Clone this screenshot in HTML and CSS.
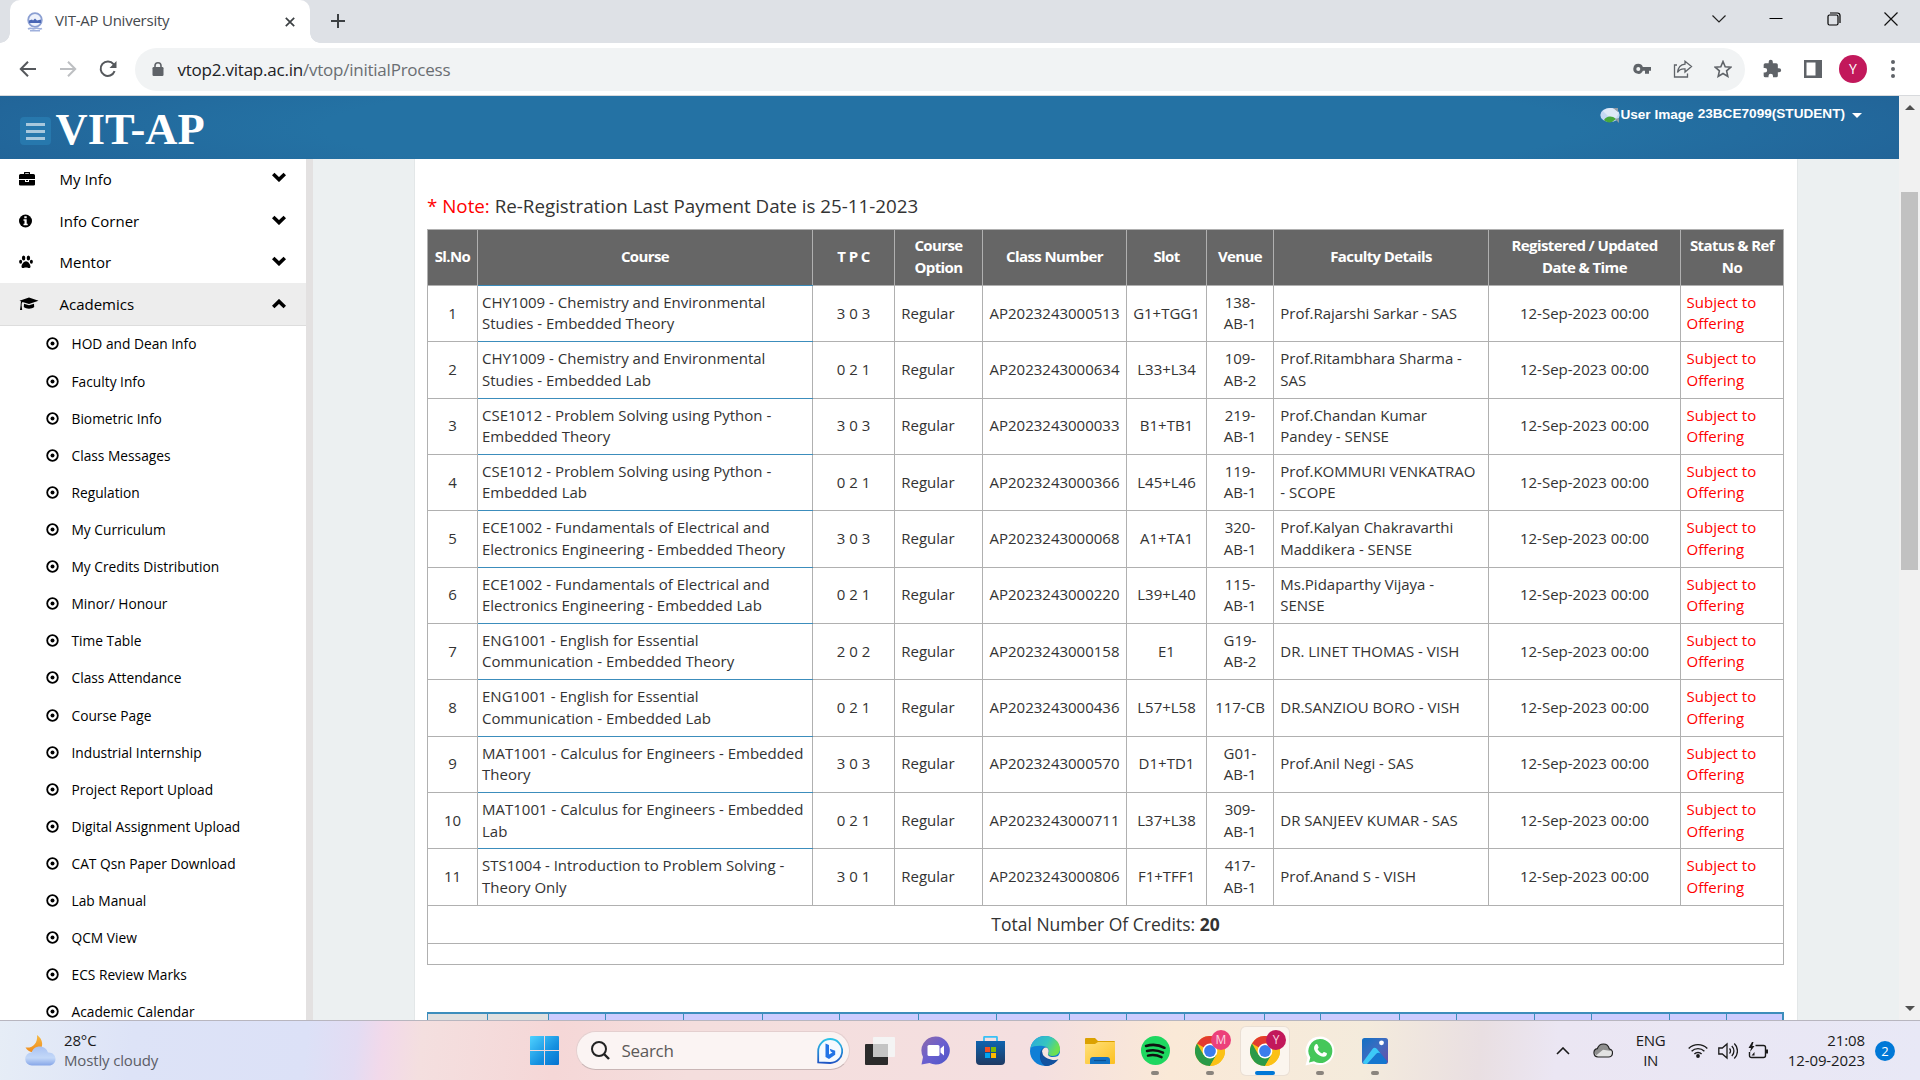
FILE: index.html
```
<!DOCTYPE html>
<html lang="en">
<head>
<meta charset="utf-8">
<title>VIT-AP University</title>
<link rel="stylesheet" href="styles.css">
</head>
<body>
<svg width="0" height="0" class="defs">
  <symbol id="dot" viewBox="0 0 13 13"><circle cx="6.5" cy="6.5" r="5.3" fill="none" stroke="#000" stroke-width="1.8"/><circle cx="6.5" cy="6.5" r="2" fill="#000"/></symbol>
  <symbol id="down" viewBox="0 0 14 10"><path d="M1.2 2 7 7.6 12.8 2" fill="none" stroke="#000" stroke-width="3.6"/></symbol>
  <symbol id="up" viewBox="0 0 14 10"><path d="M1.2 8 7 2.4 12.8 8" fill="none" stroke="#000" stroke-width="3.6"/></symbol>
  <symbol id="chrome" viewBox="0 0 30 30"><circle cx="15" cy="15" r="15" fill="#fbc116"/><path d="M15 15 2 7.5A15 15 0 0 1 28 7.5H15z" fill="#e33b2e"/><path d="M2 7.5A15 15 0 0 0 15 30L21.5 18.8 15 15 8.5 18.8z" fill="#2a9a48"/><path d="M28 7.5H15v7.500l6.500 3.800L15 30A15 15 0 0 0 28 7.500z" fill="#fbc116"/><circle cx="15" cy="15" r="7.400" fill="#fff"/><circle cx="15" cy="15" r="5.900" fill="#3b7ded"/></symbol>
</svg>

<div class="tabstrip">
  <div class="tab">
    <svg class="favicon" width="18" height="20" viewBox="0 0 18 20"><circle cx="9" cy="8" r="6.800" fill="#eef2fb" stroke="#8b9fd2" stroke-width="1.800"/><path d="M3 8.500 6 7.500 7 8.500 9 6.500 11 8.500 15 7.500V11H3z" fill="#4a67b5"/><path d="M2 17c3-2 4 1 7-.5s4 1.500 7 0M4 18.800h10" stroke="#9fb0dc" stroke-width="1.600" fill="none"/></svg>
    <span class="tab-title">VIT-AP University</span>
    <svg width="10" height="10" viewBox="0 0 10 10"><path d="M.8.8l8.400 8.400M9.200.8.8 9.200" stroke="#3c4043" stroke-width="1.700"/></svg>
  </div>
  <svg class="newtab" width="16" height="16" viewBox="0 0 16 16"><path d="M8 1v14M1 8h14" stroke="#3c4043" stroke-width="2"/></svg>
  <div class="winctl">
    <svg width="14" height="14" viewBox="0 0 14 14"><path d="M.5 3.500 7 10 13.500 3.500" stroke="#222" stroke-width="1.200" fill="none"/></svg>
    <svg width="14" height="14" viewBox="0 0 14 14"><path d="M.5 6.500h13" stroke="#000"/></svg>
    <svg width="14" height="14" viewBox="0 0 14 14"><rect x="1" y="3" width="10" height="10" rx="1.500" fill="none" stroke="#000" stroke-width="1.200"/><path d="M3 1h7.500a2.500 2.500 0 0 1 2.500 2.500V11" fill="none" stroke="#000" stroke-width="1.200"/></svg>
    <svg width="14" height="14" viewBox="0 0 14 14"><path d="M.5.5l13 13M13.500.5l-13 13" stroke="#111" stroke-width="1.200"/></svg>
  </div>
</div>

<div class="toolbar">
  <svg class="nav" width="18" height="18" viewBox="0 0 18 18"><path d="M17 9H2M9 1.800 1.800 9 9 16.200" fill="none" stroke="#55585c" stroke-width="2"/></svg>
  <svg class="nav" width="18" height="18" viewBox="0 0 18 18"><path d="M1 9h15M9 1.800 16.200 9 9 16.200" fill="none" stroke="#bdbfc2" stroke-width="2"/></svg>
  <svg class="nav" width="18" height="18" viewBox="0 0 18 18"><path d="M15.600 11.200A7.200 7.200 0 1 1 14.500 4.200L16 6" fill="none" stroke="#55585c" stroke-width="2"/><path d="M17.500 1v7h-7z" fill="#55585c"/></svg>
  <div class="omnibox">
    <svg width="12" height="15" viewBox="0 0 12 15"><rect x=".5" y="5" width="11" height="9" rx="1.200" fill="#5f6368"/><path d="M3 6V3.800a3 3 0 0 1 6 0V6" fill="none" stroke="#5f6368" stroke-width="1.600"/></svg>
    <span class="url"><b>vtop2.vitap.ac.in</b>/vtop/initialProcess</span>
    <svg class="key" width="18" height="12" viewBox="0 0 18 12"><path fill-rule="evenodd" d="M5.300.8a5 5 0 1 0 4.600 7H12v3h4v-3h2V4H9.900A5 5 0 0 0 5.300.8zm0 3.200a2 2 0 1 1 0 4 2 2 0 0 1 0-4z" fill="#5f6368"/></svg>
    <svg class="share" width="20" height="18" viewBox="0 0 20 18"><path d="M4 5H1.500v12h13v-3.500" fill="none" stroke="#5f6368" stroke-width="1.300"/><path d="M12 1.200 18.500 6.500 12 12V8.800C8.500 8.600 6 9.500 4.500 12.500 5 8 7.500 4.700 12 4.200z" fill="none" stroke="#5f6368" stroke-width="1.300"/></svg>
    <svg class="star" width="18" height="18" viewBox="0 0 18 18"><path d="M9 1.500l2.200 5.200 5.600.5-4.200 3.700 1.200 5.500L9 13.500l-4.800 2.900 1.200-5.500L1.200 7.200l5.600-.5z" fill="none" stroke="#5f6368" stroke-width="1.600"/></svg>
  </div>
  <svg class="puzzle" width="20" height="20" viewBox="0 0 24 24"><path d="M20.500 11H19V7a2 2 0 0 0-2-2h-4V3.500a2.500 2.500 0 0 0-5 0V5H4a2 2 0 0 0-2 2v3.800h1.500a2.700 2.700 0 0 1 0 5.400H2V20a2 2 0 0 0 2 2h3.800v-1.500a2.700 2.700 0 0 1 5.400 0V22H17a2 2 0 0 0 2-2v-4h1.500a2.500 2.500 0 0 0 0-5z" fill="#5f6368"/></svg>
  <svg class="panel-ico" width="18" height="18" viewBox="0 0 18 18"><path fill-rule="evenodd" d="M0 0h18v18H0zM2.500 2.500v13H11.500v-13z" fill="#5f6368"/></svg>
  <span class="avatar">Y</span>
  <svg class="dots" width="4" height="18" viewBox="0 0 4 18"><g fill="#5f6368"><circle cx="2" cy="2" r="2"/><circle cx="2" cy="9" r="2"/><circle cx="2" cy="16" r="2"/></g></svg>
</div>

<div class="viewport">
  <div class="page">
    <header class="topbar">
      <span class="burger"><i></i><i></i><i></i></span>
      <span class="logo">VIT-AP</span>
      <div class="user">
        <svg width="20" height="17" viewBox="0 0 20 17"><ellipse cx="10" cy="8" rx="9.700" ry="7" fill="#c5d8f3"/><path d="M3 4C6 1 12 0 15 2l4 4-3 5-8-2z" fill="#dfe9f8"/><path d="M4 13c2-4 8-5 12-1l-4 3c-3 1-6 0-8-2z" fill="#48a83c"/><path d="M13 1h5v4zM15 12l4 4v-5z" fill="#8f9aa5"/></svg>
        <span class="alt">User Image</span><span class="uid">23BCE7099(STUDENT)</span><i class="caret"></i>
      </div>
    </header>
    <div class="body">
      <nav class="side">
        <div class="item"><svg width="17" height="16" viewBox="0 0 17 16"><path fill-rule="evenodd" d="M5 3V1.500Q5 1 5.500 1h5q.5 0 .5.500V3h3.500Q16 3 16 4.500V8H0V4.500Q0 3 1.500 3zM6.200 3h3.600V2.200H6.200zM0 9h6v2h4V9h6v4.500q0 1-1.500 1h-13Q0 14.500 0 13.500zM7 9h2v1H7z"/></svg><span>My Info</span><svg class="chev" width="14" height="10"><use href="#down"/></svg></div>
        <div class="item"><svg width="17" height="14" viewBox="0 0 17 14"><circle cx="6.500" cy="7" r="6.500"/><path d="M5.300 2.200h2.400v2H5.300zM4.500 5.300h3.200v4.400h1v1.500H4.500V9.700h1V6.800h-1z" fill="#fff"/></svg><span>Info Corner</span><svg class="chev" width="14" height="10"><use href="#down"/></svg></div>
        <div class="item"><svg width="17" height="14" viewBox="0 0 17 14"><ellipse cx="4.600" cy="3" rx="1.700" ry="2.500"/><ellipse cx="9.400" cy="3" rx="1.700" ry="2.500"/><ellipse cx="1.600" cy="6.700" rx="1.500" ry="2"/><ellipse cx="12.400" cy="6.700" rx="1.500" ry="2"/><path d="M7 6.300c2 0 4.500 3.200 4.500 5.200 0 1.400-1.200 1.700-2.200 1.400-1.500-.5-3-.5-4.600 0-1 .3-2.200 0-2.200-1.400 0-2 2.500-5.200 4.500-5.200z"/></svg><span>Mentor</span><svg class="chev" width="14" height="10"><use href="#down"/></svg></div>
        <div class="item on"><svg width="20" height="14" viewBox="0 0 20 14"><path d="M10 .5 19.500 3.800 10 7 3.500 4.900Q2.500 5.500 2.600 8.500l.6 4.500H1l.6-4.500C1.700 6.500 1.800 5 2.200 4.500L.5 3.800zM5 6.700 10 8.300l5-1.600.2 3.200c-2.500 2.300-7.900 2.300-10.400 0z"/></svg><span>Academics</span><svg class="chev" width="14" height="10"><use href="#up"/></svg></div>
        <div class="sub"><svg width="13" height="13"><use href="#dot"/></svg>HOD and Dean Info</div>
        <div class="sub"><svg width="13" height="13"><use href="#dot"/></svg>Faculty Info</div>
        <div class="sub"><svg width="13" height="13"><use href="#dot"/></svg>Biometric Info</div>
        <div class="sub"><svg width="13" height="13"><use href="#dot"/></svg>Class Messages</div>
        <div class="sub"><svg width="13" height="13"><use href="#dot"/></svg>Regulation</div>
        <div class="sub"><svg width="13" height="13"><use href="#dot"/></svg>My Curriculum</div>
        <div class="sub"><svg width="13" height="13"><use href="#dot"/></svg>My Credits Distribution</div>
        <div class="sub"><svg width="13" height="13"><use href="#dot"/></svg>Minor/ Honour</div>
        <div class="sub"><svg width="13" height="13"><use href="#dot"/></svg>Time Table</div>
        <div class="sub"><svg width="13" height="13"><use href="#dot"/></svg>Class Attendance</div>
        <div class="sub"><svg width="13" height="13"><use href="#dot"/></svg>Course Page</div>
        <div class="sub"><svg width="13" height="13"><use href="#dot"/></svg>Industrial Internship</div>
        <div class="sub"><svg width="13" height="13"><use href="#dot"/></svg>Project Report Upload</div>
        <div class="sub"><svg width="13" height="13"><use href="#dot"/></svg>Digital Assignment Upload</div>
        <div class="sub"><svg width="13" height="13"><use href="#dot"/></svg>CAT Qsn Paper Download</div>
        <div class="sub"><svg width="13" height="13"><use href="#dot"/></svg>Lab Manual</div>
        <div class="sub"><svg width="13" height="13"><use href="#dot"/></svg>QCM View</div>
        <div class="sub"><svg width="13" height="13"><use href="#dot"/></svg>ECS Review Marks</div>
        <div class="sub last"><svg width="13" height="13"><use href="#dot"/></svg>Academic Calendar</div>
      </nav>
      <main class="content">
        <p class="note"><em>* Note:</em> Re-Registration Last Payment Date is 25-11-2023</p>
        <table class="courses">
          <colgroup><col class="w1"><col class="w2"><col class="w3"><col class="w4"><col class="w5"><col class="w6"><col class="w7"><col class="w8"><col class="w9"><col class="w10"></colgroup>
          <thead><tr><th>Sl.No</th><th>Course</th><th>T P C</th><th>Course<br>Option</th><th>Class Number</th><th>Slot</th><th>Venue</th><th>Faculty Details</th><th>Registered / Updated<br>Date &amp; Time</th><th>Status &amp; Ref<br>No</th></tr></thead>
          <tbody>
            <tr><td>1</td><td>CHY1009 - Chemistry and Environmental<br>Studies - Embedded Theory</td><td>3 0 3</td><td>Regular</td><td>AP2023243000513</td><td>G1+TGG1</td><td>138-<br>AB-1</td><td>Prof.Rajarshi Sarkar - SAS</td><td>12-Sep-2023 00:00</td><td>Subject to<br>Offering</td></tr>
            <tr><td>2</td><td>CHY1009 - Chemistry and Environmental<br>Studies - Embedded Lab</td><td>0 2 1</td><td>Regular</td><td>AP2023243000634</td><td>L33+L34</td><td>109-<br>AB-2</td><td>Prof.Ritambhara Sharma -<br>SAS</td><td>12-Sep-2023 00:00</td><td>Subject to<br>Offering</td></tr>
            <tr><td>3</td><td>CSE1012 - Problem Solving using Python -<br>Embedded Theory</td><td>3 0 3</td><td>Regular</td><td>AP2023243000033</td><td>B1+TB1</td><td>219-<br>AB-1</td><td>Prof.Chandan Kumar<br>Pandey - SENSE</td><td>12-Sep-2023 00:00</td><td>Subject to<br>Offering</td></tr>
            <tr><td>4</td><td>CSE1012 - Problem Solving using Python -<br>Embedded Lab</td><td>0 2 1</td><td>Regular</td><td>AP2023243000366</td><td>L45+L46</td><td>119-<br>AB-1</td><td>Prof.KOMMURI VENKATRAO<br>- SCOPE</td><td>12-Sep-2023 00:00</td><td>Subject to<br>Offering</td></tr>
            <tr><td>5</td><td>ECE1002 - Fundamentals of Electrical and<br>Electronics Engineering - Embedded Theory</td><td>3 0 3</td><td>Regular</td><td>AP2023243000068</td><td>A1+TA1</td><td>320-<br>AB-1</td><td>Prof.Kalyan Chakravarthi<br>Maddikera - SENSE</td><td>12-Sep-2023 00:00</td><td>Subject to<br>Offering</td></tr>
            <tr><td>6</td><td>ECE1002 - Fundamentals of Electrical and<br>Electronics Engineering - Embedded Lab</td><td>0 2 1</td><td>Regular</td><td>AP2023243000220</td><td>L39+L40</td><td>115-<br>AB-1</td><td>Ms.Pidaparthy Vijaya -<br>SENSE</td><td>12-Sep-2023 00:00</td><td>Subject to<br>Offering</td></tr>
            <tr><td>7</td><td>ENG1001 - English for Essential<br>Communication - Embedded Theory</td><td>2 0 2</td><td>Regular</td><td>AP2023243000158</td><td>E1</td><td>G19-<br>AB-2</td><td>DR. LINET THOMAS - VISH</td><td>12-Sep-2023 00:00</td><td>Subject to<br>Offering</td></tr>
            <tr><td>8</td><td>ENG1001 - English for Essential<br>Communication - Embedded Lab</td><td>0 2 1</td><td>Regular</td><td>AP2023243000436</td><td>L57+L58</td><td>117-CB</td><td>DR.SANZIOU BORO - VISH</td><td>12-Sep-2023 00:00</td><td>Subject to<br>Offering</td></tr>
            <tr><td>9</td><td>MAT1001 - Calculus for Engineers - Embedded<br>Theory</td><td>3 0 3</td><td>Regular</td><td>AP2023243000570</td><td>D1+TD1</td><td>G01-<br>AB-1</td><td>Prof.Anil Negi - SAS</td><td>12-Sep-2023 00:00</td><td>Subject to<br>Offering</td></tr>
            <tr><td>10</td><td>MAT1001 - Calculus for Engineers - Embedded<br>Lab</td><td>0 2 1</td><td>Regular</td><td>AP2023243000711</td><td>L37+L38</td><td>309-<br>AB-1</td><td>DR SANJEEV KUMAR - SAS</td><td>12-Sep-2023 00:00</td><td>Subject to<br>Offering</td></tr>
            <tr><td>11</td><td>STS1004 - Introduction to Problem Solving -<br>Theory Only</td><td>3 0 1</td><td>Regular</td><td>AP2023243000806</td><td>F1+TFF1</td><td>417-<br>AB-1</td><td>Prof.Anand S - VISH</td><td>12-Sep-2023 00:00</td><td>Subject to<br>Offering</td></tr>
          </tbody>
          <tfoot>
            <tr class="total"><td colspan="10">Total Number Of Credits: <b>20</b></td></tr>
            <tr class="blank"><td colspan="10"></td></tr>
          </tfoot>
        </table>
        <div class="slots"><i></i><i></i><i></i><i></i><i></i><i></i><i></i><i></i><i></i><i></i><i></i><i></i><i></i><i></i><i></i><i></i><i></i><i></i><i></i><i></i></div>
      </main>
    </div>
  </div>
  <div class="scroll"><i class="s-up"></i><i class="thumb"></i><i class="s-down"></i></div>
</div>

<footer class="taskbar">
  <div class="weather">
    <svg width="31" height="31" viewBox="0 0 31 31"><defs><linearGradient id="mn" x1="0" x2="0" y1="0" y2="1"><stop offset="0" stop-color="#f5b942"/><stop offset="1" stop-color="#f08c1e"/></linearGradient><linearGradient id="cl" x1="0" x2="0" y1="0" y2="1"><stop offset="0" stop-color="#a9c2f2"/><stop offset=".6" stop-color="#c3d8f8"/><stop offset="1" stop-color="#86a6e8"/></linearGradient></defs><path d="M12 0c6 4 7 12 2 15.500C9 19 3 17 .5 12.500 8 13.500 13 8 12 0z" fill="url(#mn)"/><path d="M7 30.500a6.500 6.500 0 0 1-.5-13C8 13 12 11 15.500 11.500c4 .3 6.500 3 7.500 6 4-.5 7.500 2.500 7.500 6.500s-3 6.500-6.500 6.500z" fill="url(#cl)"/></svg>
    <div><p>28°C</p><p class="dim">Mostly cloudy</p></div>
  </div>
  <svg class="start" width="29" height="29" viewBox="0 0 29 29"><defs><linearGradient id="wn" x1="0" y1="0" x2="1" y2="1"><stop offset="0" stop-color="#4fd2ff"/><stop offset=".6" stop-color="#1590e0"/><stop offset="1" stop-color="#0672d0"/></linearGradient></defs><path d="M1 0h13v14H0V1q0-1 1-1zM15 0h13q1 0 1 1v13H15zM0 15h14v14H1q-1 0-1-1zM15 15h14v13q0 1-1 1H15z" fill="url(#wn)"/></svg>
  <div class="search">
    <svg width="19" height="19" viewBox="0 0 19 19"><circle cx="8" cy="8" r="7" fill="none" stroke="#222" stroke-width="2"/><path d="M13 13l5 5" stroke="#222" stroke-width="2.400"/></svg>
    <span>Search</span>
    <svg class="bing" width="26" height="26" viewBox="0 0 26 26"><defs><linearGradient id="bg" x1="0" y1="0" x2="0" y2="1"><stop offset="0" stop-color="#2cc4e8"/><stop offset="1" stop-color="#1f55c4"/></linearGradient></defs><path d="M1.200 24.500V13a12 12 0 1 1 12 12z" fill="#f4faff" stroke="url(#bg)" stroke-width="1.800"/><path d="M8.500 5.500 12 7v9.500l3.500-2-1.800-1-1-2.800 5.500 2v4L12 21l-3.500-2z" fill="#2274e6"/></svg>
  </div>
  <div class="apps">
    <span class="app"><svg width="30" height="28" viewBox="0 0 30 28"><rect x="0" y="7" width="23" height="21" rx="1" fill="#2b2b2b"/><rect x="8" y="0" width="22" height="20" rx="1" fill="#f4f4f4"/><path d="M8 7h15v13H8z" fill="#c4c4c4"/></svg></span>
    <span class="app"><svg width="29" height="29" viewBox="0 0 29 29"><defs><linearGradient id="ct" x1="0" y1="0" x2="1" y2="1"><stop offset="0" stop-color="#8f6aa9"/><stop offset=".5" stop-color="#6a5fcf"/><stop offset="1" stop-color="#4c55c8"/></linearGradient></defs><path d="M14.500.5a14 14 0 1 1-6 26.500L.5 28.500 2 21A14 14 0 0 1 14.500.5z" fill="url(#ct)"/><rect x="6.500" y="9" width="12" height="11" rx="1.500" fill="#fff"/><path d="M19.500 12.500 23 9.500v10l-3.500-3z" fill="#fff"/></svg></span>
    <span class="app"><svg width="29" height="29" viewBox="0 0 29 29"><defs><linearGradient id="st" x1="0" y1="0" x2="0" y2="1"><stop offset="0" stop-color="#0e63ae"/><stop offset="1" stop-color="#1e3a63"/></linearGradient></defs><path d="M8 6V1.500q0-.7.700-.7h11.600q.7 0 .7.700V6" fill="none" stroke="#39c0f5" stroke-width="1.800"/><path d="M0 5h29v20q0 4-4 4H4q-4 0-4-4z" fill="url(#st)"/><path d="M9 11h5v5H9z" fill="#f25022"/><path d="M15 11h5v5h-5z" fill="#7fba00"/><path d="M9 17h5v5H9z" fill="#00a4ef"/><path d="M15 17h5v5h-5z" fill="#ffb900"/></svg></span>
    <span class="app"><svg width="30" height="30" viewBox="0 0 30 30"><defs><linearGradient id="e1" x1="0" x2="1" y1="0" y2=".4"><stop offset="0" stop-color="#2aa8dc"/><stop offset=".6" stop-color="#35c5c0"/><stop offset="1" stop-color="#6ee04f"/></linearGradient></defs><circle cx="15" cy="15" r="15" fill="#0f7fd6"/><path d="M.5 12C2 4 8 0 15 0c9 0 15 6 15 13 0 4-3 7-7.500 7-3 0-4.500-1-4.500-2.500 1.500-2 1-7-5-7.500C8 9.500 3 10 .5 12z" fill="url(#e1)"/><path d="M10 19c0-5 3-8 6-7.500 2.500.5 3.500 3.500 2 6-.5 2.500 4.500 4.500 10 2.500l.5 1.500C26 26 22 29.500 16 30c-4-1-6.500-6-6-11z" fill="#0f4f9c"/><path d="M18 17.500c-.6 2.800 4 5 10 2.500l2-3v8l-3 0C22 24 12 22 12 16c0-3 2-4.500 4-4.500 2.500.5 3.500 3.500 2 6z" fill="#f5e4df"/><path d="M28.500 23c-5 2.500-11 1.500-14-1-2-2-2.500-4-2-6-2.500 3-3 10 3.500 14 5 0 10-3 12.500-7z" fill="#12529f"/></svg></span>
    <span class="app"><svg width="30" height="26" viewBox="0 0 30 26"><defs><linearGradient id="fd" x1="0" y1="0" x2="1" y2="1"><stop offset="0" stop-color="#ffe07a"/><stop offset="1" stop-color="#fcc021"/></linearGradient></defs><path d="M0 1q0-1 1-1h9l3 3h16q1 0 1 1v4H0z" fill="#dba100"/><path d="M0 6h10l3-2h17v21q0 1-1 1H1q-1 0-1-1z" fill="url(#fd)"/><path d="M5 26v-4q0-3 3-3h14q3 0 3 3v4z" fill="#1272c4"/><path d="M9 22.500h12" stroke="#0b4f91" stroke-width="1.200"/></svg></span>
    <span class="app run"><svg width="29" height="29" viewBox="0 0 29 29"><circle cx="14.500" cy="14.500" r="14.500" fill="#1ed760"/><path d="M5 10c6-1.800 13-1.200 18.500 1.800M6 15c5-1.400 11-.9 16 1.700M7 19.600c4.500-1.100 9-.7 13.500 1.500" fill="none" stroke="#101010" stroke-width="2.500" stroke-linecap="round"/></svg></span>
    <span class="app run"><svg width="30" height="30"><use href="#chrome"/></svg><b class="who pink">M</b></span>
    <span class="app run active"><svg width="30" height="30"><use href="#chrome"/></svg><b class="who">Y</b></span>
    <span class="app run"><svg width="30" height="30" viewBox="0 0 30 30"><path d="M15 .5A14.300 14.300 0 1 1 8.500 27.500L.5 29.500 2.600 22A14.300 14.300 0 0 1 15 .5z" fill="#fff"/><path d="M15 3A12 12 0 1 1 9 25.200L4 26.500 5.300 21.500A12 12 0 0 1 15 3z" fill="#45c75a"/><path d="M10.500 8.500c1-.8 1.800-.3 2.200.6l.9 2.100c.2.700-.8 1.500-1 2 1 2 2.500 3.300 4.500 4.200.7-.3 1.200-1.700 2-1.500l2.500 1.200c.7.500.3 2-.6 2.800-1.500 1.200-3.500 1-6-.2-3-1.500-5-4-5.800-6.300-.5-2 .2-3.800 1.300-4.900z" fill="#fff"/></svg></span>
    <span class="app run"><svg width="26" height="26" viewBox="0 0 26 26"><defs><linearGradient id="ph" x1="0" y1="0" x2="1" y2="1"><stop offset="0" stop-color="#1170c4"/><stop offset=".5" stop-color="#3f6cc0"/><stop offset="1" stop-color="#6d4ca4"/></linearGradient></defs><rect width="26" height="26" rx="2.500" fill="url(#ph)"/><path d="M5 26 14 16.500l-1.500-6.800q1.200 0 2.500 1.300L25.500 23.500 24 26z" fill="#1576cf"/><path d="M1 24 10.500 11q2-2.500 4.500 0l3.500 4.500q-2.500-1.500-4.500.5L5 26H3q-2 0-2-2z" fill="#3cc9f7"/><circle cx="19.500" cy="4.800" r="2.400" fill="#fff"/></svg></span>
  </div>
  <div class="tray">
    <svg class="t-chev" width="14" height="8" viewBox="0 0 14 8"><path d="M1 7l6-6 6 6" fill="none" stroke="#1a1a1a" stroke-width="1.600"/></svg>
    <svg class="t-cloud" width="20" height="15" viewBox="0 0 20 15"><path d="M5 14a4.200 4.200 0 0 1-.7-8.300C5.500 2 8 1 10.500 1c3 0 5 1.800 5.800 4.800 2 .4 3.200 2 3.200 4C19.500 12 18 14 15.500 14z" fill="#e3e3e3"/><path d="M1 8.500 4.300 5.700C5.500 2 8 1 10.500 1c3 0 5 1.800 5.800 4.800L18.500 8 10 6.800 3 12.500z" fill="#8f8f8f"/><path d="M5 14a4.200 4.200 0 0 1-.7-8.300C5.500 2 8 1 10.500 1c3 0 5 1.800 5.800 4.800 2 .4 3.200 2 3.200 4C19.500 12 18 14 15.500 14z" fill="none" stroke="#222" stroke-width="1.200"/></svg>
    <div class="lang"><p>ENG</p><p>IN</p></div>
    <svg class="t-wifi" width="20" height="15" viewBox="0 0 20 15"><g fill="none" stroke="#1a1a1a" stroke-width="1.400"><path d="M.7 5.500a13.200 13.200 0 0 1 18.600 0M3.600 8.300a9 9 0 0 1 12.800 0M6.400 11a5 5 0 0 1 7.200 0"/></g><circle cx="10" cy="13" r="1.900" fill="#1a1a1a"/></svg>
    <svg class="t-vol" width="20" height="18" viewBox="0 0 20 18"><g fill="none" stroke="#1a1a1a" stroke-width="1.300"><path d="M.8 6v6h3.500L9 16V2L4.300 6z"/><path d="M11.500 6.500a3.500 3.500 0 0 1 0 5M13.800 4a7 7 0 0 1 0 10M16.300 1.500a10.500 10.500 0 0 1 0 15"/></g></svg>
    <svg class="t-bat" width="20" height="17" viewBox="0 0 20 17"><path d="M7.500 3.500h8q2 0 2 2v8q0 2-2 2h-12q-2 0-2-2V10" fill="none" stroke="#1a1a1a" stroke-width="1.400"/><path d="M18 7.500h2v4h-2zM4 0 .5 6H3L2 10l4.500-6H4.300L5.500 0z" fill="#1a1a1a"/><path d="M3.500 13.500h3V10z" fill="#1a1a1a"/></svg>
    <div class="clock"><p>21:08</p><p>12-09-2023</p></div>
    <span class="badge">2</span>
  </div>
</footer>
</body>
</html>
```
FILE: styles.css
```
* { box-sizing: border-box; }
html, body { margin: 0; height: 1080px; overflow: hidden; }
body { display: flex; flex-direction: column; font-family: "Open Sans", "Noto Sans", sans-serif; font-size: 15px; color: #333; background: #fff; }
p { margin: 0; }
svg { display: block; flex: none; }
.defs { position: absolute; }

.tabstrip { height: 43px; flex: none; display: flex; align-items: flex-start; background: #dee1e6; padding-left: 10px; }
.tab { position: relative; width: 300px; height: 43px; background: #fff; border-radius: 10px 10px 0 0; display: flex; align-items: center; padding: 0 15px 0 16px; }
.tab::before, .tab::after { content: ""; position: absolute; bottom: 0; width: 10px; height: 10px; }
.tab::before { left: -10px; background: radial-gradient(circle at 0 0, #dee1e6 9.5px, #fff 10px); }
.tab::after { right: -10px; background: radial-gradient(circle at 100% 0, #dee1e6 9.5px, #fff 10px); }
.tab-title { flex: 1; margin: -3px 0 0 11px; letter-spacing: -.24px; color: #45494d; }
.newtab { margin: 13px 0 0 20px; }
.winctl { margin-left: auto; display: flex; gap: 43.3px; padding: 12px 22px 0 0; }

.toolbar { height: 53px; flex: none; display: flex; align-items: center; background: #fff; border-bottom: 1px solid #d8dadd; padding-left: 19px; }
.nav { margin-right: 22px; }
.toolbar .nav:nth-child(3) { margin-right: 18px; }
.omnibox { width: 1610px; height: 43px; border-radius: 22px; background: #f1f3f4; display: flex; align-items: center; padding: 0 13px 0 17px; }
.url { flex: 1; margin-left: 13.500px; font-size: 17px; letter-spacing: -.23px; color: #6a6e72; }
.url b { font-weight: 400; color: #202124; }
.share { margin-left: 22px; }
.star { margin-left: 21px; }
.puzzle { margin-left: 17px; }
.panel-ico { margin-left: 22px; }
.avatar { width: 28px; height: 28px; margin-left: 17px; border-radius: 50%; background: #c2185b; color: #fff; font-size: 14px; line-height: 28px; text-align: center; }
.dots { margin-left: 23.5px; }

.viewport { height: 924px; flex: none; display: flex; overflow: hidden; }
.page { width: 1899px; display: flex; flex-direction: column; }
.topbar { height: 63px; flex: none; display: flex; align-items: flex-start; padding-left: 19.500px; background: radial-gradient(ellipse 60% 160% at 50% 50%, #2472a4 55%, #22669a 85%, #205f8e 110%); }
.burger { width: 31px; height: 28px; margin-top: 21px; border-radius: 4px; background: #2778ad; display: flex; flex-direction: column; align-items: center; justify-content: center; gap: 4px; padding-left: 1px; }
.burger i { width: 19px; height: 3px; background: #a8c8dd; }
.logo { margin-left: 5px; margin-top: 7px; font: bold 44.5px/52px "Liberation Serif", serif; color: #fff; }
.user { margin-left: auto; margin-right: 37px; margin-top: 8px; display: flex; align-items: center; color: #fff; font: bold 13.6px/18px "Liberation Sans", sans-serif; }
.user svg { margin: 2px 0 0 1px; }
.alt { margin-top: 2px; }
.uid { margin-left: 4px; }
.caret { margin: 2px 0 0 7px; border: 5px solid transparent; border-top-color: #fff; border-bottom: 0; }

.body { flex: 1; display: flex; min-height: 0; background: #ecf0f1; overflow: hidden; }
.side { width: 313px; flex: none; background: #fff; border-right: 7px solid #e3e1e1; color: #000; }
.item { height: 41.4px; display: flex; align-items: center; padding: 0 20px 0 19px; }
.item span { flex: 1; margin-left: 23.5px; }
.item:first-child { padding-bottom: 1.500px; }
.item.on { height: 42.5px; background: #ededed; border-bottom: 1px solid #ddd; }
.item.on span { margin-left: 20.5px; }
.item.on .chev { margin-top: 0; }
.chev { margin-top: -3px; }
.sub { height: 37.12px; display: flex; align-items: center; gap: 12.500px; padding: 0 0 .6px 46px; font-size: 13.75px; }
.sub.last { height: 26px; line-height: 14px; align-items: flex-start; padding-top: 11.500px; }
.content { width: 1384px; margin-left: 101px; flex: none; background: #fff; border-left: 1px solid #e3e7e8; border-right: 1px solid #e3e7e8; padding: 34px 0 0 12px; overflow: hidden; }
.note { height: 35.500px; line-height: 27px; font-size: 18.78px; }
.note em { font-style: normal; color: #f00; }

.courses { width: 1357px; table-layout: fixed; border-collapse: collapse; line-height: 21.43px; text-align: center; }
.w1 { width: 50px; } .w2 { width: 335px; } .w3 { width: 82px; } .w4 { width: 88px; } .w5 { width: 144px; }
.w6 { width: 80px; } .w7 { width: 67px; } .w8 { width: 215px; } .w9 { width: 192px; } .w10 { width: 103px; }
.courses th, .courses td { height: 56.37px; padding: 0 0 .5px; border: 1px solid #b0b0b0; white-space: nowrap; }
.courses th { background: #666; color: #fff; letter-spacing: -.6px; }
.courses td:nth-child(2) { text-align: left; padding-left: 4px; border-top-color: #3c8dbc; }
.courses tr:not(:last-child) td:nth-child(2), .courses th:nth-child(2) { border-bottom-color: #3c8dbc; }
.courses td:nth-child(4), .courses td:nth-child(8), .courses td:nth-child(10) { text-align: left; padding-left: 6.25px; }
.courses td:nth-child(10) { color: #f00; padding-left: 5.600px; }
.courses .total td { height: 38px; padding-top: 1px; font-size: 17.5px; }
.courses .blank td { height: 21px; }
.slots { margin-top: 47px; width: 1357px; height: 20px; display: grid; grid-template-columns: 61px 61px 57px 78px 79px 77px 79px 78px 73px 57px 58px 80px 56px 79px 57px 78px 57px 78px 57px 57px; border-top: 2px solid #3c8dbc; background: #ccf; }
.slots i { border-right: 1px solid #3c8dbc; }
.slots i:nth-child(-n+2) { background: #e0e0e0; }
.slots i:first-child { box-shadow: inset 1px 0 #3c8dbc; }
.slots i:last-child { border-right-width: 2px; }

.scroll { width: 21px; background: #f1f1f1; display: flex; flex-direction: column; align-items: center; }
.scroll .s-up { margin-top: 9px; border: 5px solid transparent; border-bottom-color: #505050; border-top: 0; }
.scroll .thumb { margin-top: 82px; width: 17px; height: 378px; background: #c1c1c1; }
.scroll .s-down { margin: auto 0 9px; border: 5px solid transparent; border-top-color: #505050; border-bottom: 0; }

.taskbar { height: 60px; flex: none; display: flex; align-items: center; border-top: 1px solid #b8b6bf; color: #1b1b1b; line-height: 20px;
  background: linear-gradient(96deg, #e6edf6 0, #dde3f7 7%, #dce1f7 16%, #e3dcf3 18.6%, #f2d9ea 20%, #f4dfdf 22%, #f5d7d7 29%, #f4dedd 36%, #f4dfe0 54%, #fae9d7 61%, #f4ebdc 71%, #e9dfe2 77%, #ebe6f3 81%, #e8e8f6 100%); }
.weather { width: 529.5px; flex: none; display: flex; align-items: center; gap: 8px; padding-left: 25px; letter-spacing: -.15px; }
.weather p { margin-top: -2px; line-height: 22px; }
.weather .dim { color: #5b5d66; }
.search { width: 274px; height: 39px; flex: none; margin-left: 17px; border-radius: 20px; background: #fbf4f3; border: 1px solid #e4cfcf; border-bottom-color: #c9b5b5; display: flex; align-items: center; padding: 0 6px 0 14px; font-size: 17px; letter-spacing: -.3px; color: #5c5958; }
.search span { flex: 1; margin-left: 12px; }
.apps { display: flex; margin-left: 2.500px; gap: 7px; flex: none; }
.app { position: relative; width: 48px; height: 48px; border-radius: 5px; display: flex; align-items: center; justify-content: center; }
.apps .app:first-child { margin-left: 4px; }
.app.active { background: #fbf5ee; box-shadow: 0 0 0 1px #eadfd4; }
.app.run::after { content: ""; position: absolute; left: 20px; bottom: 0; width: 8px; height: 4px; border-radius: 2px; background: #8a847d; }
.app.run.active::after { left: 14px; width: 20px; background: #0078d7; }
.who { position: absolute; left: 25px; top: 3px; width: 20px; height: 20px; border-radius: 50%; background: #c2185b; color: #fbd5e2; font-weight: 400; font-size: 12px; line-height: 20px; text-align: center; }
.who.pink { background: #ec407a; }
.tray { margin-left: auto; display: flex; align-items: center; padding-right: 25px; letter-spacing: -.1px; }
.tray p { margin-top: -1px; line-height: 21px; }
.t-cloud { margin-left: 23px; }
.lang { width: 31px; margin-left: 22px; text-align: center; letter-spacing: -.4px; }
.t-wifi { margin-left: 22px; }
.t-vol { margin-left: 10px; }
.t-bat { margin-left: 10px; }
.clock { width: 80px; margin-left: 17px; text-align: right; }
.badge { width: 20px; height: 20px; margin-left: 10px; border-radius: 50%; background: #0078d7; color: #fff; font-size: 13px; line-height: 20px; text-align: center; }
```
